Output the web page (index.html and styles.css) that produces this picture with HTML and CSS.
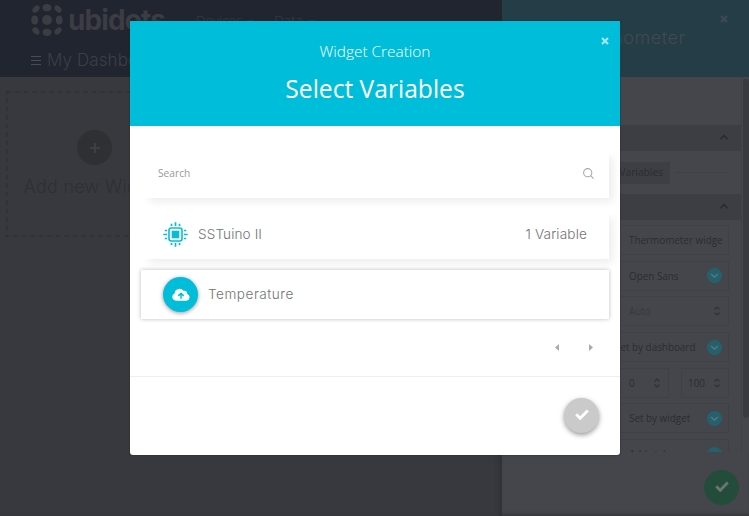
FILE: index.html
```html
<!DOCTYPE html>
<html lang="en">
<head>
<meta charset="utf-8">
<title>Widget Creation</title>
<link rel="stylesheet" href="styles.css">
</head>
<body>
<svg class="defs" width="0" height="0">
  <symbol id="chev" viewBox="0 0 15 15"><circle cx="7.5" cy="7.5" r="7.5" fill="#24616d"/><path d="M4.1 6l3.4 3.2L10.9 6" fill="none" stroke="#56757c" stroke-width="1.6"/></symbol>
  <symbol id="spin" viewBox="0 0 8 12"><path d="M1.5 4.5L4 2l2.5 2.5M1.5 7.5L4 10l2.5-2.5" fill="none" stroke="#303136" stroke-width="1.2"/></symbol>
  <symbol id="up" viewBox="0 0 10 8"><path d="M1.5 6.2L5 2.6l3.5 3.6" fill="none" stroke="#292a2f" stroke-width="1.5"/></symbol>
  <symbol id="check" viewBox="0 0 14 11"><path d="M1.2 5.3l4 4L12.8 1.4" fill="none" stroke="currentColor" stroke-width="2.9"/></symbol>
  <symbol id="cross" viewBox="0 0 8 8"><path d="M1 1l6 6M7 1L1 7" fill="none" stroke="currentColor" stroke-width="2.2"/></symbol>
</svg>
<div class="app">
  <div class="dashboard">
    <header class="top">
      <div class="brandbar">
        <svg class="dots" viewBox="0 0 32 32" fill="#3b3d42">
          <ellipse cx="5" cy="5" rx="4.1" ry="2.9" transform="rotate(-45 5 5)"/><ellipse cx="16" cy="3.7" rx="4.4" ry="3.6"/><ellipse cx="27" cy="5" rx="4.1" ry="2.9" transform="rotate(45 27 5)"/>
          <ellipse cx="3.7" cy="16" rx="3.4" ry="4.5"/><circle cx="16" cy="16" r="4.9"/><ellipse cx="28.3" cy="16" rx="3.4" ry="4.5"/>
          <ellipse cx="5" cy="27" rx="4.1" ry="2.9" transform="rotate(45 5 27)"/><ellipse cx="16" cy="28.3" rx="4.4" ry="3.6"/><ellipse cx="27" cy="27" rx="4.1" ry="2.9" transform="rotate(-45 27 27)"/>
        </svg>
        <span class="brand">ubidots</span>
        <nav><span>Devices<i></i></span><span>Data<i></i></span></nav>
      </div>
      <div class="titlebar"><span class="burger"></span><span class="dash-title">My Dashboard</span></div>
    </header>
    <div class="canvas">
      <div class="add-widget">
        <svg class="dash-line" width="177" height="146"><rect x=".75" y=".75" width="175.5" height="144.5" fill="none" stroke="#2f3034" stroke-width="1.5" stroke-dasharray="4.5 4"/></svg>
        <span class="plus"><svg width="10" height="10"><path d="M5 0v10M0 5h10" stroke="#424348" stroke-width="1.6"/></svg></span>
        <span class="add-label">Add new Widget</span>
      </div>
    </div>
  </div>
  <aside class="panel">
    <header class="panel-head"><span>Thermometer</span><svg class="panel-x"><use href="#cross"/></svg></header>
    <div class="scroll">
      <div class="settings">
        <div class="section first"><svg><use href="#up"/></svg></div>
        <div class="vars"><span>Add Variables</span><i></i></div>
        <div class="section"><svg><use href="#up"/></svg></div>
        <div class="fields">
          <div class="field"><span>Thermometer widge</span></div>
          <div class="field"><span>Open Sans</span><svg class="chev"><use href="#chev"/></svg></div>
          <div class="field faint"><span>Auto</span><svg class="spin"><use href="#spin"/></svg></div>
          <div class="field wide"><span>Set by dashboard</span><svg class="chev"><use href="#chev"/></svg></div>
          <div class="pair">
            <div class="field"><span>0</span><svg class="spin"><use href="#spin"/></svg></div>
            <div class="field"><span>100</span><svg class="spin"><use href="#spin"/></svg></div>
          </div>
          <div class="field"><span>Set by widget</span><svg class="chev"><use href="#chev"/></svg></div>
          <div class="field"><span>Add style</span><svg class="chev"><use href="#chev"/></svg></div>
        </div>
      </div>
      <div class="track"><div class="thumb"></div></div>
    </div>
    <footer class="panel-foot"><span class="save"><svg><use href="#check"/></svg></span></footer>
  </aside>
</div>

<div class="overlay">
  <section class="modal">
    <header class="modal-head">
      <div class="eyebrow">Widget Creation</div>
      <div class="heading">Select Variables</div>
      <svg class="modal-x"><use href="#cross"/></svg>
    </header>
    <div class="modal-body">
      <div class="card search"><span>Search</span>
        <svg width="11" height="11" viewBox="0 0 11 11" fill="none" stroke="#aaa" stroke-width="1.1"><circle cx="4.7" cy="4.7" r="4.1"/><path d="M7.6 7.6L10.6 10.6"/></svg>
      </div>
      <div class="card device">
        <svg width="25" height="25" viewBox="0 0 25 25" fill="none" stroke="#06bdd8">
          <rect x="6" y="6" width="13" height="13" rx="2.2" stroke-width="1.6"/><rect x="8.7" y="8.7" width="7.6" height="7.6" fill="#06bdd8" stroke="none"/>
          <path d="M12.5 .3v3.8M8.5 1.8v2.2M16.5 1.8v2.2M12.5 20.9v3.8M8.5 21v2.2M16.5 21v2.2M.3 12.5h3.8M1.8 8.5h2.2M1.8 16.5h2.2M20.9 12.5h3.8M21 8.5h2.2M21 16.5h2.2" stroke-width="1.7"/>
        </svg>
        <span class="name">SSTuino II</span><span class="count">1 Variable</span>
      </div>
      <div class="card variable">
        <span class="cloud"><svg width="18" height="13" viewBox="0 0 18 13"><path d="M4 12.7A3.8 3.8 0 0 1 2.6 5.4 4.9 4.9 0 0 1 11.5 2.8a2.9 2.9 0 0 1 3.7 3.1A3.5 3.5 0 0 1 14.5 12.7z" fill="#fff"/><path d="M9 10.8V5.7M6.3 7.9L9 5.2l2.7 2.7" fill="none" stroke="#00bdd9" stroke-width="1.5"/></svg></span>
        <span class="name">Temperature</span>
      </div>
      <div class="pager"><svg width="4" height="7"><path d="M4 0v7L0 3.5z" fill="#aaa"/></svg><svg width="4" height="7"><path d="M0 0v7l4-3.5z" fill="#aaa"/></svg></div>
    </div>
    <footer class="modal-foot"><span class="confirm"><svg><use href="#check"/></svg></span></footer>
  </section>
</div>
</body>
</html>
```
FILE: styles.css
```css
* { box-sizing: border-box; }
body { margin: 0; width: 749px; height: 516px; overflow: hidden; background: #38393e; font-family: "Open Sans", sans-serif; }
svg { display: block; flex: none; }
.defs { position: absolute; }
.app { display: flex; height: 516px; }
.dashboard { width: 502px; overflow: hidden; box-shadow: inset -5px 0 6px -4px #2b2c31; }
.top { height: 77px; background: #20252f; color: #3d3f45; }
.brandbar { height: 42px; display: flex; padding: 4px 0 0 31px; white-space: nowrap; }
.dots { width: 32px; height: 32px; }
.brand { font: 700 28px/32px Inter, sans-serif; letter-spacing: -.9px; width: 98px; margin: 0 0 0 5px; color: #3b3d42; }
nav { display: flex; gap: 20px; margin-left: 30px; font: 300 13.5px/32px "Open Sans", sans-serif; }
nav i { display: inline-block; margin: 0 0 2px 6px; border: 3px solid transparent; border-top-color: #393b42; border-bottom: 0; }
.titlebar { display: flex; align-items: center; padding-left: 31px; height: 35px; white-space: nowrap; }
.burger { width: 10px; height: 9px; border-top: 1px solid #4a4c52; border-bottom: 1px solid #4a4c52; background: linear-gradient(#4a4c52, #4a4c52) 0 3px / 100% 1px no-repeat; margin-top: 2px; }
.dash-title { font: 300 17px/24px Inter, sans-serif; margin: 0 0 0 6px; letter-spacing: .1px; }
.canvas { padding: 14px 0 0 6px; }
.add-widget { position: relative; width: 177px; height: 146px; display: flex; flex-direction: column; align-items: center; padding-top: 39px; color: #2e2f34; }
.dash-line { position: absolute; left: 0; top: 0; }
.plus { width: 35px; height: 35px; border-radius: 50%; background: #2f3034; display: grid; place-items: center; }
.add-label { font: 300 18px/24px Inter, sans-serif; margin-top: 10px; letter-spacing: .25px; white-space: nowrap; }

.panel { width: 247px; background: #45464b; display: flex; flex-direction: column; color: #2b2c31; }
.panel-head { position: relative; height: 77px; background: #243d46; color: #454950; text-align: center; font: 300 18px/76px Inter, sans-serif; letter-spacing: .6px; }
.panel-x { position: absolute; right: 21px; top: 15px; width: 8px; height: 8px; color: #3e4b52; }
.scroll { display: flex; height: 375px; overflow: hidden; }
.settings { width: 239px; flex: none; padding-top: 48px; }
.section { height: 26px; background: #3d3e43; display: flex; align-items: center; justify-content: flex-end; padding-right: 12px; }
.section svg { width: 10px; height: 8px; margin-top: -2px; }
.vars { height: 43px; display: flex; align-items: center; padding: 0 11px 0 0; }
.vars span { width: 76px; height: 22px; margin-left: 92px; background: #3e3f44; font-size: 10.2px; line-height: 21px; text-align: right; padding-right: 7px; white-space: nowrap; }
.vars i { flex: 1; height: 1px; background: #404146; margin-left: 5px; }
.fields { margin: 5px 12px 0 108px; display: flex; flex-direction: column; gap: 5.7px; }
.field { height: 30px; flex: none; border: 1px solid #404146; display: flex; align-items: center; justify-content: space-between; padding: 0 6.5px 0 18px; font-size: 9.9px; white-space: nowrap; }
.wide { padding-left: 4px; }
.faint span { color: #36383d; }
.chev { width: 15px; height: 15px; }
.spin { width: 8px; height: 12px; margin-right: 1px; }
.pair { display: flex; gap: 12px; height: 30px; }
.pair .field { width: 59px; }
.pair .field + .field { width: 48px; padding-left: 6px; }
.track { width: 8px; border-left: 1px solid #404146; padding: 2px 0 0 1px; }
.thumb { width: 6px; height: 339px; border-radius: 3px; background: #393a40; }
.panel-foot { flex: 1; display: flex; justify-content: flex-end; padding: 18px 10px 0 0; box-shadow: inset 0 -4px 4px -3px #303136; }
.save { width: 35px; height: 35px; border-radius: 50%; background: #244c3b; color: #66776f; display: grid; place-items: center; }
.save svg, .confirm svg { width: 14px; height: 11px; margin-top: -2px; }

.overlay { position: absolute; inset: 0; display: flex; justify-content: center; align-items: flex-start; padding-top: 21px; }
.modal { width: 490px; height: 434px; margin-left: 1px; background: #fff; border-radius: 0 0 3px 3px; box-shadow: 0 0 2px #25262b; overflow: hidden; }
.modal-head { position: relative; height: 105px; background: #00bdd9; color: #fff; text-align: center; padding-top: 19px; }
.eyebrow { font: 300 15.4px/24px "Open Sans", sans-serif; }
.heading { font-size: 24.6px; line-height: 34px; margin-top: 8px; }
.modal-x { position: absolute; right: 11px; top: 15.5px; width: 8px; height: 8px; color: #a3e7f1; }
.modal-body { height: 251px; padding: 23px 11px 0; border-bottom: 1px solid #eee; }
.card { display: flex; align-items: center; background: #fff; color: #747474; }
.search { height: 49px; padding: 0 15px 0 17px; font-size: 10.2px; color: #999; box-shadow: 6px 6px 8px -2px #eee; justify-content: space-between; }
.search span { margin-top: -2px; }
.device { height: 49px; margin-top: 12px; padding: 0 22px; box-shadow: 6px 6px 8px -2px #eee; }
.name, .count { font: 300 13.6px/20px Inter, sans-serif; margin-top: -2px; }
.device .name { margin-left: 10px; letter-spacing: .1px; }
.count { margin-left: auto; letter-spacing: .15px; }
.variable { position: relative; height: 49px; margin-top: 11px; padding-left: 22px; border-radius: 1px; box-shadow: 0 0 4px #bbb; }
.cloud { width: 35px; height: 35px; border-radius: 50%; background: #00bdd9; display: grid; place-items: center; box-shadow: 0 1px 4px #999; }
.variable .name { margin-left: 10px; letter-spacing: .5px; }
.pager { display: flex; justify-content: flex-end; gap: 30px; padding: 25px 16px 0 0; }
.modal-foot { display: flex; justify-content: flex-end; padding: 21px 21px 0 0; }
.confirm { width: 35px; height: 35px; border-radius: 50%; background: #cacaca; color: #fff; box-shadow: 0 2px 5px #999; display: grid; place-items: center; }
```
